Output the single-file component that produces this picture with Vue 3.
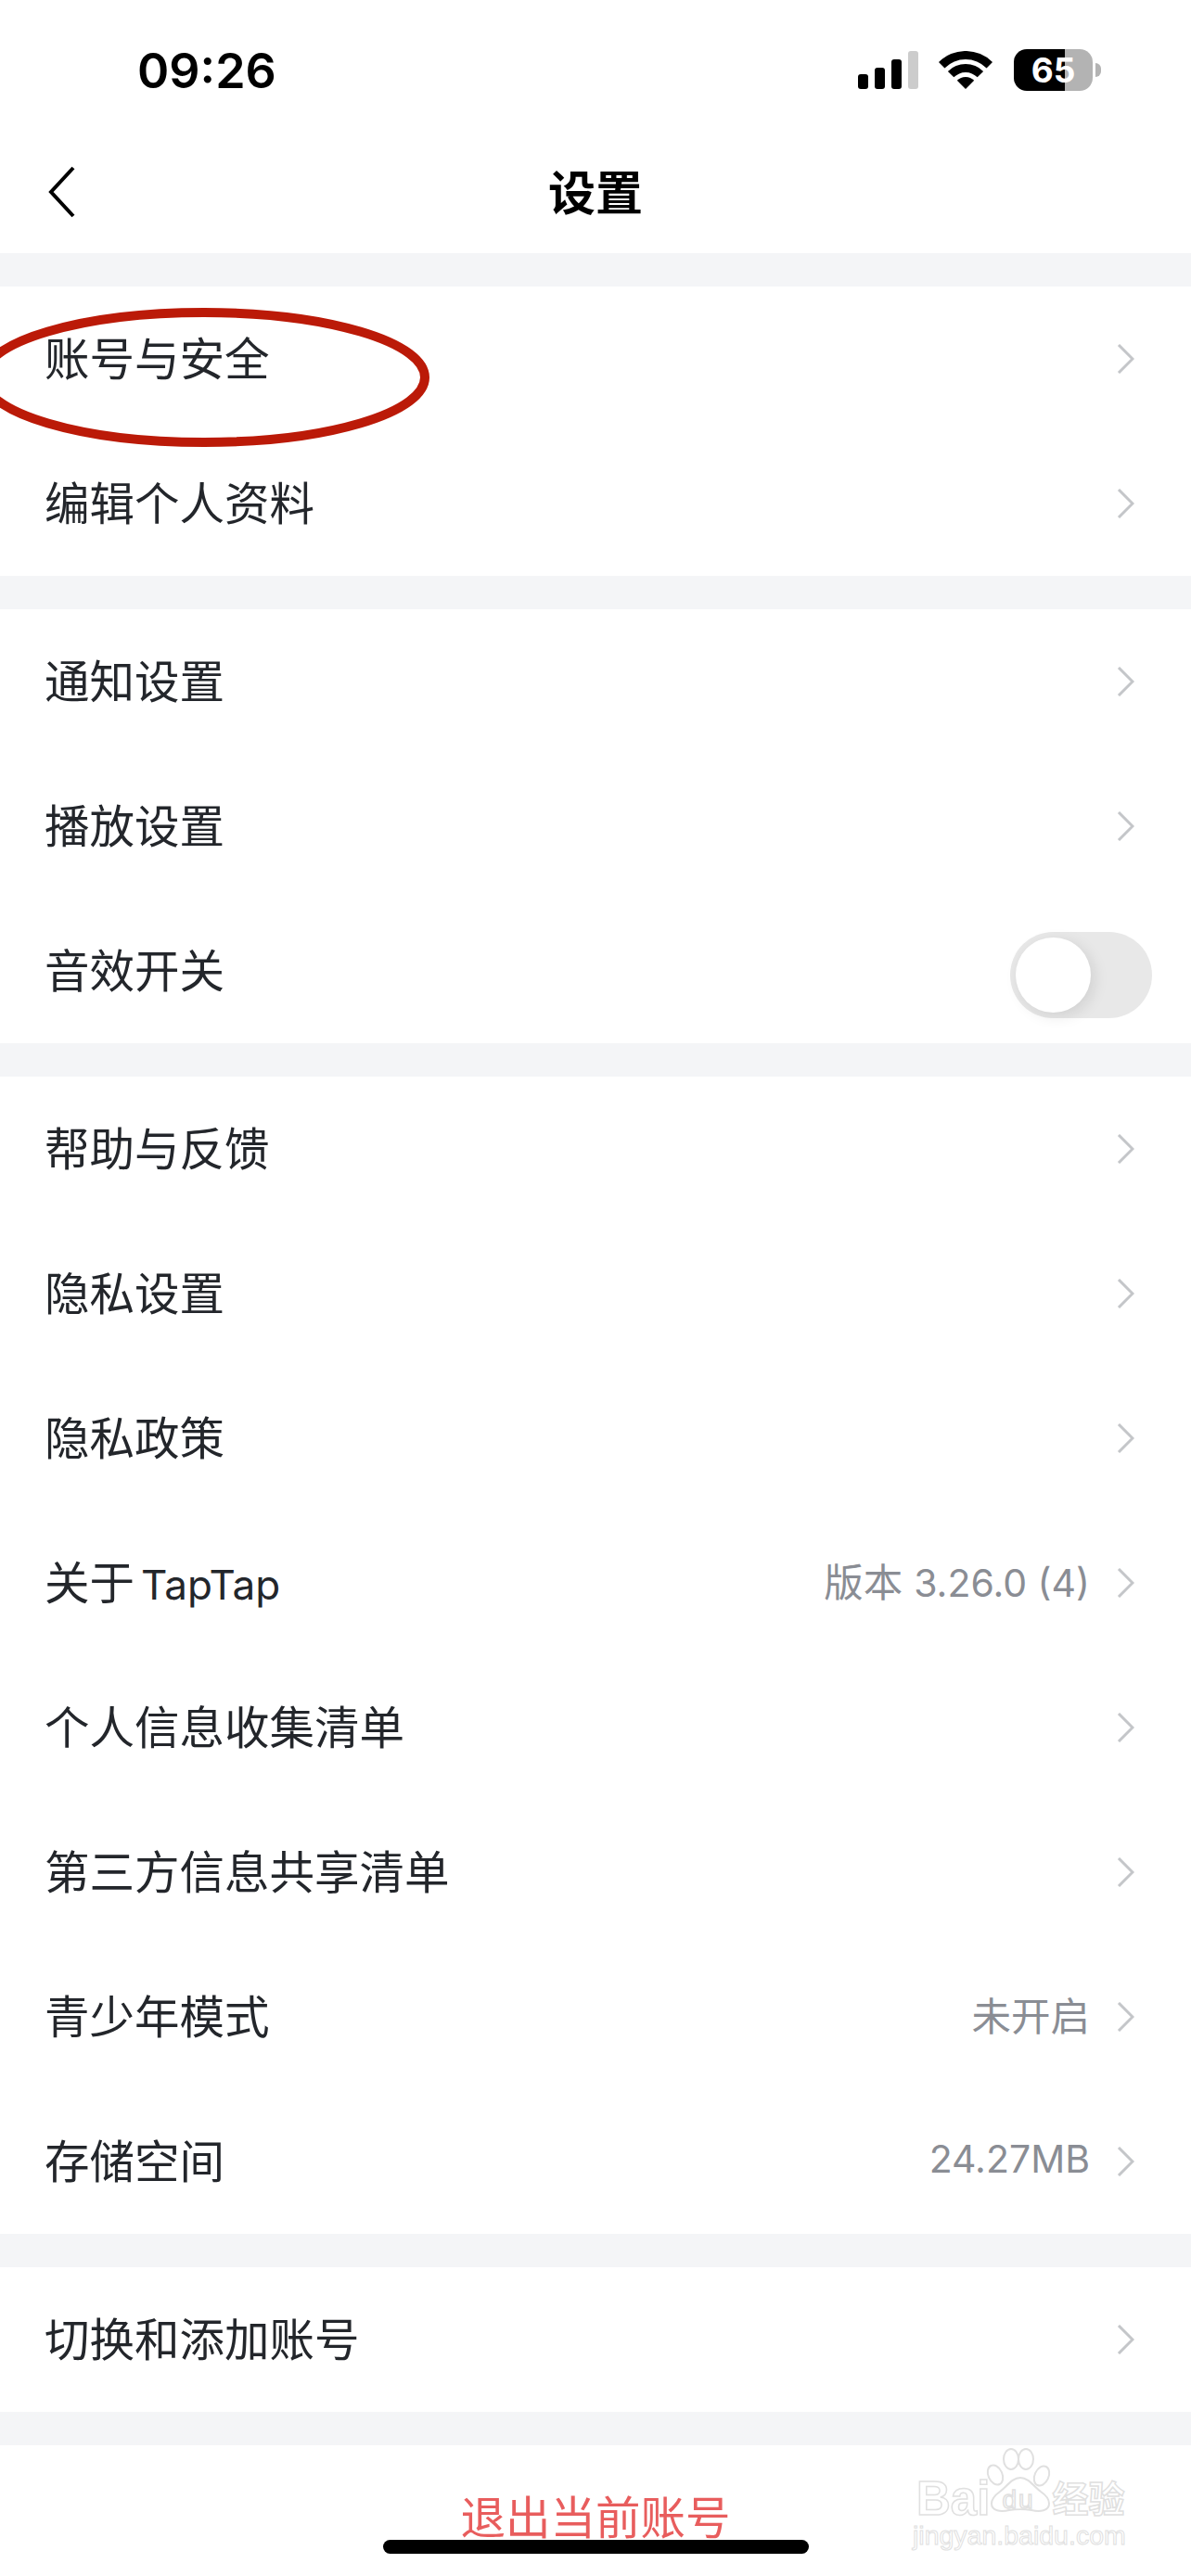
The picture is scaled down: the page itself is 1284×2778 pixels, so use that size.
<script setup>
const groups = [
  [{ label: "账号与安全" }, { label: "编辑个人资料" }],
  [{ label: "通知设置" }, { label: "播放设置" }, { label: "音效开关", toggle: true }],
  [
    { label: "帮助与反馈" },
    { label: "隐私设置" },
    { label: "隐私政策" },
    { label: "关于", latin: "TapTap", prefix: "版本 ", value: "3.26.0 (4)" },
    { label: "个人信息收集清单" },
    { label: "第三方信息共享清单" },
    { label: "青少年模式", prefix: "未开启" },
    { label: "存储空间", value: "24.27MB" },
  ],
  [{ label: "切换和添加账号" }],
];
</script>

<template>
  <div class="page">
    <div class="status">
      <span class="time">09:26</span>
      <div class="status-icons">
        <div class="signal">
          <i class="bar b1"></i>
          <i class="bar b2"></i>
          <i class="bar b3"></i>
          <i class="bar b4"></i>
        </div>
        <svg class="wifi" width="58" height="41" viewBox="0 0 58 41">
          <path d="M0 12 A41 41 0 0 1 58 12 L51.6 18.4 A32 32 0 0 0 6.4 18.4 Z" fill="#000" />
          <path d="M9.9 21.9 A27 27 0 0 1 48.1 21.9 L41.700 28.3 A18 18 0 0 0 16.3 28.3 Z" fill="#000" />
          <path d="M19.8 31.8 A13 13 0 0 1 38.2 31.8 L29 41 Z" fill="#000" />
        </svg>
        <div class="battery">
          <span class="level">65</span>
        </div>
        <i class="nub"></i>
      </div>
    </div>

    <header class="nav">
      <svg class="back" width="32" height="56" viewBox="0 0 32 56">
        <path d="M29 2 L5 28 L29 54" fill="none" stroke="#000" stroke-width="4" />
      </svg>
      <h1>设置</h1>
    </header>

    <section v-for="(group, i) in groups" :key="i" class="group">
      <div v-for="row in group" :key="row.label" class="row">
        <span class="label">{{ row.label }}<span v-if="row.latin" class="latin">{{ row.latin }}</span></span>
        <span v-if="row.prefix || row.value" class="value"><span class="prefix">{{ row.prefix }}</span>{{ row.value }}</span>
        <div v-if="row.toggle" class="toggle"><i class="knob"></i></div>
        <svg v-else class="chevron" width="19" height="32" viewBox="0 0 19 32">
          <path d="M2 1 L17 16 L2 31" fill="none" stroke="#c4c6c9" stroke-width="3" />
        </svg>
      </div>
    </section>

    <section class="group">
      <div class="row logout">退出当前账号</div>
    </section>

    <svg class="oval" width="480" height="160" viewBox="0 0 480 160">
      <ellipse cx="220" cy="80" rx="238" ry="70" fill="none" stroke="#bb1a08" stroke-width="10" />
    </svg>

    <div class="watermark">
      <div class="wm-top">
        <span class="wm-baidu">Bai</span>
        <div class="paw">
          <svg width="76" height="72" viewBox="0 0 76 72">
            <g fill="#fff" stroke="#e0e0e0" stroke-width="2">
              <ellipse cx="12" cy="29" rx="7.5" ry="11" transform="rotate(-25 12 29)" />
              <ellipse cx="29" cy="12" rx="8" ry="11" />
              <ellipse cx="45" cy="12" rx="8" ry="11" />
              <ellipse cx="62" cy="30" rx="7.5" ry="11" transform="rotate(25 62 30)" />
              <path d="M39 32 C30 32 24 42 17 47 C10 52 8 56 8 60 C8 68 18 69 27 67 C33 66 45 66 51 67 C60 69 70 68 70 60 C70 55 67 51 61 47 C54 42 48 32 39 32 Z" />
            </g>
          </svg>
          <span class="wm-du">du</span>
        </div>
        <span class="wm-cn">经验</span>
      </div>
      <div class="wm-url">jingyan.baidu.com</div>
    </div>

    <div class="home"></div>
  </div>
</template>

<style>
html,
body {
  margin: 0;
  background: #fff;
}
</style>

<style scoped>
.page {
  position: relative;
  width: 1284px;
  height: 2778px;
  overflow: hidden;
  background: #f4f5f7;
  font-family: Inter, "Noto Sans CJK SC", sans-serif;
  color: #23262b;
}
.status {
  height: 153px;
  padding: 53px 97px 0 148px;
  box-sizing: border-box;
  background: #fff;
  display: flex;
  justify-content: space-between;
  align-items: flex-start;
}
.time {
  font-size: 52px;
  font-weight: 600;
  line-height: 48px;
  color: #000;
}
.status-icons {
  display: flex;
  align-items: flex-start;
}
.signal {
  display: flex;
  align-items: flex-end;
  gap: 7px;
  height: 41px;
  margin-top: 2px;
  margin-right: 22px;
}
.bar {
  width: 11px;
  background: #000;
  border-radius: 3px;
}
.b1 { height: 16px; }
.b2 { height: 23px; }
.b3 { height: 32px; }
.b4 { height: 41px; background: #ccc; }
.wifi {
  margin-top: 2px;
  margin-right: 23px;
}
.battery {
  width: 85px;
  height: 45px;
  border-radius: 14px;
  background: linear-gradient(to right, #000 55px, #b3b3b3 55px);
  display: flex;
  justify-content: center;
  align-items: center;
}
.level {
  font-size: 37px;
  font-weight: 700;
  color: #fff;
  line-height: 45px;
}
.nub {
  width: 6px;
  height: 15px;
  margin: 15px 0 0 3px;
  background: #b3b3b3;
  border-radius: 0 8px 8px 0;
}
.nav {
  height: 120px;
  padding-bottom: 16px;
  box-sizing: border-box;
  background: #fff;
  display: flex;
  align-items: center;
  justify-content: center;
  position: relative;
}
.nav h1 {
  margin: 0;
  font-size: 51px;
  font-weight: 700;
  color: #000;
}
.back {
  position: absolute;
  left: 50px;
  top: 26px;
}
.group {
  margin-top: 36px;
  background: #fff;
}
.row {
  height: 156px;
  padding: 0 61px 0 48px;
  display: flex;
  align-items: center;
  font-size: 48.5px;
}
.label {
  flex: 1;
  margin-bottom: 7px;
}
.latin {
  margin-left: 7px;
  font-size: 44px;
}
.value {
  margin: 0 29px 7px 0;
  font-size: 41px;
  color: #8a8d94;
}
.prefix {
  font-size: 42.5px;
}
.chevron {
  display: block;
}
.toggle {
  width: 153px;
  height: 93px;
  margin: 9px -19px 0 0;
  border-radius: 47px;
  background: #e8e8e8;
  position: relative;
}
.knob {
  position: absolute;
  left: 6px;
  top: 6px;
  width: 81px;
  height: 81px;
  border-radius: 50%;
  background: #fff;
  box-shadow: 4px 4px 16px rgba(0, 0, 0, 0.1);
}
.logout {
  justify-content: center;
  padding: 0 0 7px;
  box-sizing: border-box;
  color: #e85d5d;
}
.oval {
  position: absolute;
  left: 0;
  top: 327px;
}
.watermark {
  position: absolute;
  left: 984px;
  top: 2640px;
  width: 240px;
  color: #fff;
  -webkit-text-stroke: 1.5px #e0e0e0;
  font-family: "Liberation Sans", "Noto Sans CJK SC", sans-serif;
}
.wm-top {
  display: flex;
  align-items: flex-end;
  height: 80px;
  line-height: 1;
}
.wm-baidu {
  margin-left: 4px;
  font-size: 51px;
  font-weight: 700;
}
.paw {
  position: relative;
  width: 76px;
  height: 72px;
  margin: 0 0 8px -6px;
}
.paw svg {
  display: block;
}
.wm-du {
  position: absolute;
  left: 19px;
  top: 42px;
  font-size: 28px;
  letter-spacing: 2px;
}
.wm-cn {
  margin: 0 0 5px -3px;
  font-size: 39px;
  font-weight: 700;
}
.wm-url {
  font-size: 28.5px;
  line-height: 28px;
  -webkit-text-stroke: 1px #e0e0e0;
}
.home {
  position: absolute;
  left: 413px;
  top: 2739px;
  width: 459px;
  height: 15px;
  border-radius: 8px;
  background: #000;
}
</style>
